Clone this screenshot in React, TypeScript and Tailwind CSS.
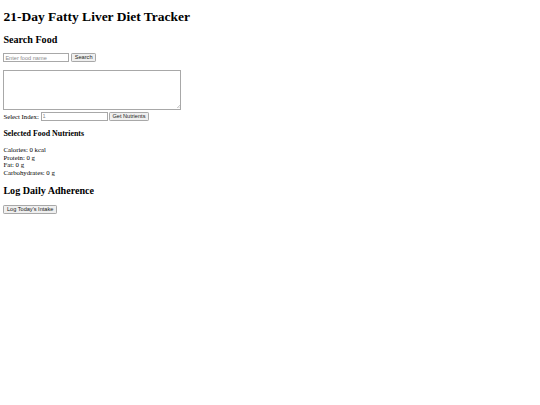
import React from "react";

const serif = "font-['Liberation_Serif','Times_New_Roman',serif]";
const sans = "font-['Liberation_Sans',Arial,sans-serif]";

function Btn({ children, w }: { children: React.ReactNode; w: string }) {
  return (
    <button
      className={`${sans} ${w} h-[9px] shrink-0 rounded-[1.2px] border-[0.6px] border-[#a8a8a8] bg-[#efefef] text-[5.6px] leading-none text-[#222]`}
    >
      {children}
    </button>
  );
}

export default function App() {
  return (
    <div className={`${serif} min-h-[405px] w-[540px] bg-white px-[3.4px] text-[6.75px] leading-[7.76px] text-black`}>
      <h1 className="mt-[9px] mb-[9px] text-[13.5px] font-bold leading-[15.5px]">
        21-Day Fatty Liver Diet Tracker
      </h1>
      <h2 className="mb-[8.4px] text-[10.1px] font-bold leading-[11.6px]">Search Food</h2>
      <div className="flex h-[9px] items-center gap-[2px]">
        <input
          className={`${sans} h-[9px] w-[66px] border-[0.6px] border-[#a8a8a8] px-[1px] text-[5.6px] leading-none placeholder:text-[#8a8a8a] outline-none`}
          placeholder="Enter food name"
        />
        <Btn w="w-[24.5px]">Search</Btn>
      </div>
      <div className="relative mt-[7.5px] h-[40px] w-[178px] border-[0.6px] border-[#a8a8a8]">
        <svg className="absolute right-[0.5px] bottom-[0.5px]" width="4" height="4" viewBox="0 0 4 4">
          <path d="M1 4 L4 1 M2.5 4 L4 2.5" stroke="#9a9a9a" strokeWidth="0.5" />
        </svg>
      </div>
      <div className="mt-[2px] flex h-[9px] items-center gap-[1.7px]">
        <span className="whitespace-nowrap">Select Index:</span>
        <input
          className={`${sans} h-[9px] w-[67px] border-[0.6px] border-[#a8a8a8] px-[1px] text-[5.6px] leading-none placeholder:text-[#8a8a8a] outline-none`}
          placeholder="1"
        />
        <Btn w="w-[39.5px]">Get Nutrients</Btn>
      </div>
      <h3 className="mt-[7.9px] mb-[7.9px] text-[7.9px] font-bold leading-[9.1px]">
        Selected Food Nutrients
      </h3>
      <div>
        <div>Calories: 0 kcal</div>
        <div>Protein: 0 g</div>
        <div>Fat: 0 g</div>
        <div>Carbohydrates: 0 g</div>
      </div>
      <h2 className="mt-[8.4px] mb-[8.4px] text-[10.1px] font-bold leading-[11.6px]">
        Log Daily Adherence
      </h2>
      <div className="flex">
        <Btn w="w-[53.5px]">Log Today&apos;s Intake</Btn>
      </div>
    </div>
  );
}
